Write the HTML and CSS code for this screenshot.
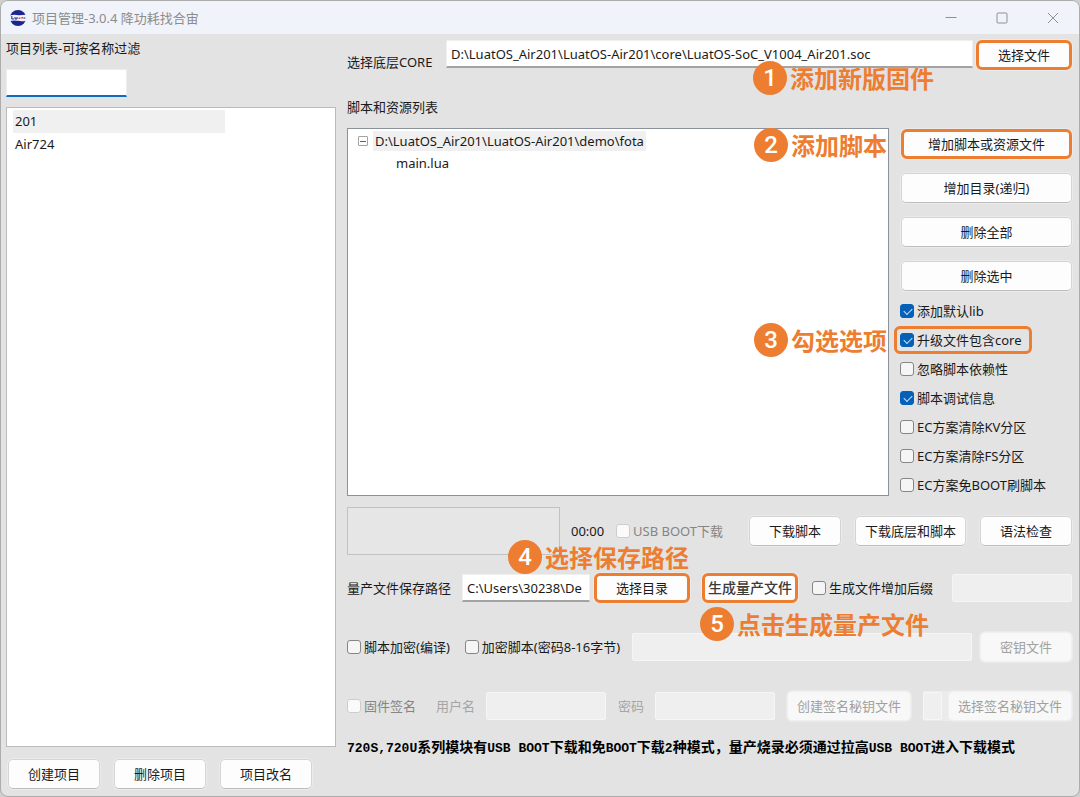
FILE: index.html
```html
<!DOCTYPE html>
<html lang="zh-CN">
<head>
<meta charset="utf-8">
<title>项目管理-3.0.4</title>
<link rel="stylesheet" href="styles.css">
</head>
<body>
<div class="window">
  <header class="titlebar">
    <svg class="logo" viewBox="0 0 16 16" aria-hidden="true">
      <circle cx="8" cy="8" r="8" fill="#1c2490"/>
      <path d="M0 5.6 C3 4.4 6 4.8 9 5.2 L16 4.8 V10.8 C12 11.8 8 11 5 10.6 L0 11Z" fill="#f0f3f9"/>
      <path d="M1.8 6 V9 H4 M5 7 V9 H7 V7" fill="none" stroke="#1c2490" stroke-width="1"/>
      <path d="M8.5 8.2 H10.3 M11.3 7.8 H13" fill="none" stroke="#e0404c" stroke-width="1.6"/>
      <path d="M13.4 8 H15.4" stroke="#1c2490" stroke-width="1"/>
    </svg>
    <h1 class="title">项目管理-3.0.4 降功耗找合宙</h1>
    <div class="controls">
      <button class="ctl" aria-label="最小化"><svg viewBox="0 0 12 12"><path d="M0.500 5.500H11.500"/></svg></button>
      <button class="ctl" aria-label="最大化"><svg viewBox="0 0 12 12"><rect x="1" y="1" width="10" height="10" rx="1"/></svg></button>
      <button class="ctl" aria-label="关闭"><svg viewBox="0 0 12 12"><path d="M1 1L11 11M11 1L1 11"/></svg></button>
    </div>
  </header>

  <main class="content">
    <section class="projects">
      <label class="filter-label" for="filter">项目列表-可按名称过滤</label>
      <input class="filter" id="filter" type="text">
      <ul class="list">
        <li class="item selected">201</li>
        <li class="item">Air724</li>
      </ul>
      <div class="project-actions">
        <button class="btn">创建项目</button>
        <button class="btn">删除项目</button>
        <button class="btn">项目改名</button>
      </div>
    </section>

    <section class="detail">
      <div class="core-row">
        <label class="core-label" for="core">选择底层CORE</label>
        <input class="field core-field" id="core" type="text" value="D:\LuatOS_Air201\LuatOS-Air201\core\LuatOS-SoC_V1004_Air201.soc">
        <button class="btn mark">选择文件</button>
        <div class="note note-1"><span class="num">1</span>添加新版固件</div>
      </div>
      <h2 class="subtitle">脚本和资源列表</h2>

      <div class="resources">
        <div class="tree">
          <div class="node"><span class="toggle"></span><span class="path">D:\LuatOS_Air201\LuatOS-Air201\demo\fota</span></div>
          <div class="leaf">main.lua</div>
        </div>
        <div class="side">
          <button class="btn mark">增加脚本或资源文件</button>
          <button class="btn">增加目录(递归)</button>
          <button class="btn">删除全部</button>
          <button class="btn">删除选中</button>
          <div class="checks">
            <label class="check"><input type="checkbox" checked>添加默认lib</label>
            <label class="check check-mark"><input type="checkbox" checked>升级文件包含core</label>
            <label class="check"><input type="checkbox">忽略脚本依赖性</label>
            <label class="check"><input type="checkbox" checked>脚本调试信息</label>
            <label class="check"><input type="checkbox">EC方案清除KV分区</label>
            <label class="check"><input type="checkbox">EC方案清除FS分区</label>
            <label class="check"><input type="checkbox">EC方案免BOOT刷脚本</label>
          </div>
        </div>
        <div class="note note-2"><span class="num">2</span>添加脚本</div>
        <div class="note note-3"><span class="num">3</span>勾选选项</div>
      </div>

      <div class="row download-row">
        <div class="progress"></div>
        <span class="timer">00:00</span>
        <label class="check muted"><input type="checkbox" disabled>USB BOOT下载</label>
        <div class="download-actions">
          <button class="btn">下载脚本</button>
          <button class="btn wide">下载底层和脚本</button>
          <button class="btn">语法检查</button>
        </div>
        <div class="note note-4"><span class="num">4</span>选择保存路径</div>
      </div>

      <div class="row save-row">
        <label for="save">量产文件保存路径</label>
        <input class="field save-field" id="save" type="text" value="C:\Users\30238\De">
        <button class="btn mark">选择目录</button>
        <button class="btn mark tight">生成量产文件</button>
        <label class="check suffix-check"><input type="checkbox">生成文件增加后缀</label>
        <input class="field off suffix" type="text" aria-label="后缀" disabled>
        <div class="note note-5"><span class="num">5</span>点击生成量产文件</div>
      </div>

      <div class="row key-row">
        <label class="check"><input type="checkbox">脚本加密(编译)</label>
        <label class="check key-check"><input type="checkbox">加密脚本(密码8-16字节)</label>
        <input class="field off key-field" type="text" aria-label="密码" disabled>
        <button class="btn" disabled>密钥文件</button>
      </div>

      <div class="row sign-row">
        <label class="check muted"><input type="checkbox" disabled>固件签名</label>
        <label class="faint user-label" for="user">用户名</label>
        <input class="field off sign-field" id="user" type="text" disabled>
        <label class="faint" for="pass">密码</label>
        <input class="field off sign-field" id="pass" type="password" disabled>
        <button class="btn wider" disabled>创建签名秘钥文件</button>
        <div class="sign-pick">
          <input class="field off tiny" type="text" aria-label="签名秘钥文件" disabled>
          <button class="btn wider" disabled>选择签名秘钥文件</button>
        </div>
      </div>

      <p class="hint"><span>720S,720U</span>系列模块有<span>USB BOOT</span>下载和免<span>BOOT</span>下载<span>2</span>种模式，量产烧录必须通过拉高<span>USB BOOT</span>进入下载模式</p>
    </section>
  </main>
</div>
</body>
</html>
```
FILE: styles.css
```css
* { box-sizing: border-box; }

body {
  margin: 0;
  background: #cfcfcf;
  color: #1a1a1a;
  font-family: "Noto Sans", "Noto Sans CJK SC", sans-serif;
  font-size: 13px;
  line-height: 20px;
}

button, input { font: inherit; color: inherit; }

.window {
  display: flex;
  flex-direction: column;
  min-height: 100vh;
  background: #e3e3e3;
  border: 1px solid #acacac;
  border-radius: 8px;
  overflow: hidden;
}

.titlebar {
  display: flex;
  align-items: center;
  height: 33px;
  padding: 0 1px 0 9px;
  background: #f0f3f9;
}
.logo { width: 16px; height: 16px; margin-right: 6px; }
.title { margin: 0; font-size: 13px; font-weight: 400; color: #8c8c8c; }
.controls { display: flex; margin-left: auto; }
.ctl {
  display: grid;
  place-items: center;
  width: 51px;
  height: 33px;
  padding: 0;
  border: 0;
  background: none;
}
.ctl svg { width: 12px; height: 12px; fill: none; stroke: #8f9196; stroke-width: 1; }

.content { display: flex; flex: 1; gap: 11px; padding: 0 7px 7px 5px; }

/* Project list */
.projects { display: flex; flex-direction: column; width: 330px; }
.filter-label { margin-top: 4px; }
.filter {
  width: 121px;
  height: 28px;
  margin: 11px 0 10px;
  padding: 0 4px;
  border: 1px solid #ededed;
  border-bottom: 2px solid #0f6cbd;
  background: #fff;
}
.list {
  flex: 1;
  margin: 0;
  padding: 2px 6px;
  list-style: none;
  background: #fff;
  border: 1px solid #b9bbbf;
}
.item { width: 212px; height: 23px; padding: 1px 2px; }
.selected { background: #f0f0f0; }
.project-actions { display: flex; gap: 14px; margin: 12px 0 0 2px; }

/* Controls */
.btn {
  flex: none;
  width: 92px;
  height: 30px;
  padding: 0;
  background: #fdfdfd;
  border: 1px solid #d4d4d4;
  border-bottom-color: #bdbdbd;
  border-radius: 5px;
  box-shadow: 0 0 0 1px #ebebeb;
  white-space: nowrap;
}
.btn:disabled { color: #a0a0a0; background: #f8f8f8; border-color: #efefef; }
.wide { width: 111px; }
.wider { width: 124px; }
.mark { width: 96px; border: 3px solid #ed7d31; border-radius: 6px; }

.field {
  min-width: 0;
  height: 28px;
  padding: 0 4px;
  background: #fff;
  border: 1px solid #efefef;
  border-bottom: 2px solid #a3a3a3;
  border-radius: 0;
}
.off { background: #efefef; border: 1px solid #f6f6f6; border-radius: 2px; }

.check { display: flex; align-items: center; gap: 3px; white-space: nowrap; }
.check input {
  appearance: none;
  flex: none;
  width: 14px;
  height: 14px;
  margin: 0;
  background: #f5f5f5;
  border: 1px solid #868686;
  border-radius: 3px;
}
.check input:checked {
  background: #0560b8;
  border-color: #0560b8;
}
.check input:checked::after {
  content: "";
  display: block;
  width: 7px;
  height: 4px;
  margin: 3px 0 0 3px;
  border: solid #d4e4f5;
  border-width: 0 0 1px 1px;
  transform: rotate(-45deg);
}
.check input:disabled { background: #fafafa; border-color: #cdcdcd; }
.muted { color: #858585; }
.faint { color: #a5a5a5; }

/* Detail pane */
.detail { display: flex; flex: 1; flex-direction: column; min-width: 0; }
.core-row { position: relative; display: flex; gap: 3px; padding-top: 6px; }
.core-label { width: 96px; margin-top: 12px; }
.core-field { flex: 1; }
.subtitle { margin: 25px 0 11px; font-size: 13px; font-weight: 400; }

.resources { position: relative; display: flex; flex: 1; gap: 12px; }
.tree { flex: 1; padding: 2px 10px; background: #fff; border: 1px solid #8b929c; }
.node { display: flex; align-items: center; gap: 5px; }
.toggle {
  display: grid;
  place-items: center;
  width: 10px;
  height: 10px;
  border: 1px solid #a3a3a3;
  border-radius: 1px;
}
.toggle::after { content: ""; width: 6px; height: 1px; background: #4a5f96; }
.path { padding: 0 2px; background: #f0f0f0; }
.leaf { margin: 2px 0 0 38px; }

.side { display: flex; flex-direction: column; gap: 14px; width: 171px; padding-top: 1px; }
.side .btn { width: 100%; }
.checks { display: flex; flex-direction: column; gap: 9px; margin: -4px 0 0 -1px; }
.checks .check { height: 20px; }
.checks .check-mark {
  align-self: flex-start;
  height: 28px;
  margin: -4px -6px;
  padding: 0 7px 0 3px;
  border: 3px solid #ed7d31;
  border-radius: 6px;
}

.row { position: relative; display: flex; align-items: center; height: 30px; margin-top: 29px; }
.row > label { flex: none; }
.download-row { height: 48px; margin-top: 11px; }
.progress { width: 213px; height: 48px; margin-right: 11px; background: #e6e6e6; border: 1px solid #c2c2c2; }
.timer { width: 45px; }
.download-actions { display: flex; gap: 14px; margin-left: auto; }
.save-row { margin-top: 18px; }
.save-field { width: 128px; margin: 0 4px 0 11px; }
.tight { margin: 0 14px 0 12px; font-size: 14px; font-weight: 500; color: #3a3a3a; }
.suffix { width: 120px; margin-left: auto; }
.key-check { margin-left: 15px; }
.key-field { flex: 1; margin: 0 8px 0 12px; }
.user-label { margin-left: 20px; }
.sign-field { width: 120px; margin: 0 12px 0 11px; }
.sign-pick { display: flex; align-items: center; gap: 6px; margin-left: auto; background: #ebebeb; }
.tiny { width: 19px; }

.hint {
  margin: 17px 0 30px;
  font-family: "Liberation Mono", "Noto Sans CJK SC", monospace;
  font-size: 14px;
  font-weight: 700;
  color: #000;
  white-space: nowrap;
}
.hint span { font-size: 13px; }

/* Step annotations over the window */
.note {
  position: absolute;
  z-index: 1;
  display: flex;
  align-items: center;
  gap: 3px;
  font-family: "Noto Sans CJK SC", sans-serif;
  font-size: 24px;
  font-weight: 700;
  line-height: 34px;
  color: #ed7d31;
  white-space: nowrap;
}
.num {
  width: 34px;
  border-radius: 50%;
  background: #ed7d31;
  color: #fff;
  font-family: Roboto, sans-serif;
  font-weight: 500;
  text-align: center;
}
.note-1 { top: 27px; right: 138px; }
.note-2 { top: 0; right: 185px; }
.note-3 { top: 195px; right: 185px; }
.note-4 { top: 33px; left: 161px; }
.note-5 { top: 34px; left: 353px; }
```
